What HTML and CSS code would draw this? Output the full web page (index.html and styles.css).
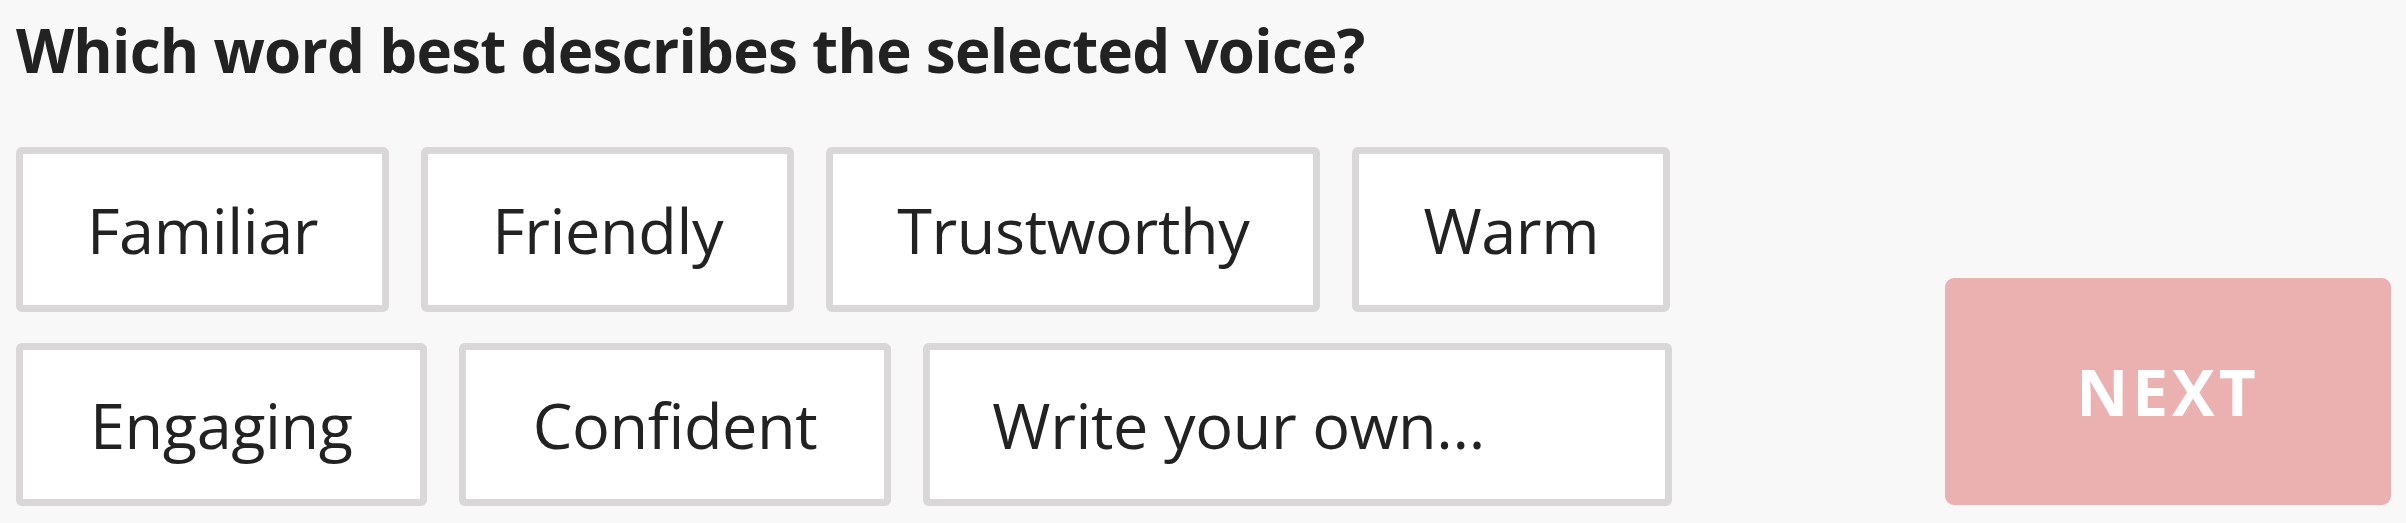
FILE: index.html
```html
<!DOCTYPE html>
<html lang="en">
<head>
<meta charset="utf-8">
<title>Voice description</title>
<link rel="stylesheet" href="styles.css">
</head>
<body>
<main class="page">
  <h1 class="question">Which word best describes the selected voice?</h1>
  <div class="panel">
    <div class="choices">
      <div class="choice-row">
        <button class="chip">Familiar</button>
        <button class="chip">Friendly</button>
        <button class="chip">Trustworthy</button>
        <button class="chip">Warm</button>
      </div>
      <div class="choice-row choice-row-second">
        <button class="chip">Engaging</button>
        <button class="chip">Confident</button>
        <div class="chip chip-input">Write your own...</div>
      </div>
    </div>
    <button class="next" disabled>NEXT</button>
  </div>
</main>
</body>
</html>
```

FILE: styles.css
```css
html, body {
  margin: 0;
  padding: 0;
  background: #f8f8f8;
}

.page {
  padding: 12px 15px 0 16px;
  font-family: "Open Sans", "Noto Sans", sans-serif;
  color: #222222;
}

.question {
  margin: 0;
  font-size: 60px;
  line-height: 76px;
  font-weight: 700;
  letter-spacing: -0.7px;
}

.panel {
  display: flex;
  align-items: flex-end;
  justify-content: space-between;
  margin-top: 59px;
}

.choices {
  display: flex;
  flex-direction: column;
  gap: 31px;
}

.choice-row {
  display: flex;
  gap: 32px;
}

.chip {
  box-sizing: border-box;
  height: 165px;
  display: flex;
  align-items: center;
  justify-content: center;
  padding: 0 64px;
  background: #ffffff;
  border: 7px solid #d9d7d8;
  border-radius: 6px;
  font-family: inherit;
  font-size: 63px;
  font-weight: 400;
  letter-spacing: -0.4px;
  color: #222222;
  line-height: 1;
  margin: 0;
}

.choice-row-second .chip {
  height: 163px;
  padding: 0 67px;
}

.choice-row-second .chip-input {
  width: 749px;
  justify-content: flex-start;
  padding-left: 62px;
}

.next {
  box-sizing: border-box;
  width: 446px;
  height: 227px;
  margin: 0 0 1px 0;
  border: none;
  border-radius: 9px;
  background: #eab1b0;
  color: #ffffff;
  font-family: inherit;
  font-size: 64px;
  font-weight: 700;
  letter-spacing: 4px;
  line-height: 1;
}
```
